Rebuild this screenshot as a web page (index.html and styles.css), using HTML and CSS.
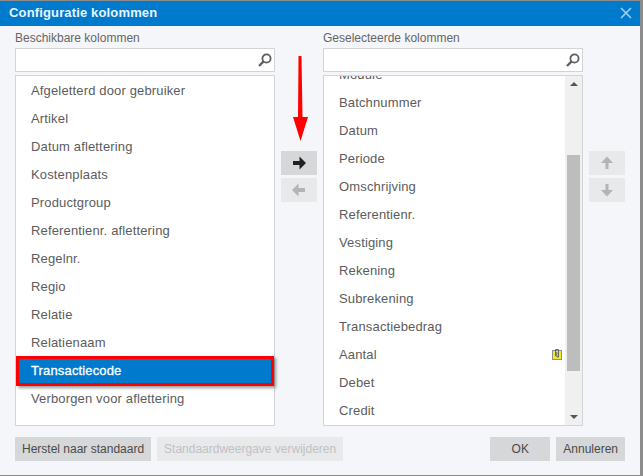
FILE: index.html
```html
<!DOCTYPE html>
<html>
<head>
  <title>Configuratie kolommen</title>
  <link rel="stylesheet" href="styles.css">
</head>
<body>
  <div class="dialog">
    <div class="title-bar">
      <span class="title">Configuratie kolommen</span>
      <svg class="close" width="12" height="12" viewBox="0 0 12 12"><path d="M1 1l10 10M11 1L1 11" stroke="#9fd0ee" stroke-width="1.6" fill="none"/></svg>
    </div>

    <div class="content">
      <div class="column">
        <div class="col-label">Beschikbare kolommen</div>
        <div class="search">
          <svg width="14" height="14" viewBox="0 0 14 14"><circle cx="8.500" cy="5.500" r="4.100" stroke="#5e5e5e" stroke-width="1.800" fill="none"/><path d="M5.600 8.400L1 13" stroke="#5e5e5e" stroke-width="2.200"/></svg>
        </div>
        <div class="list">
          <div class="row">Afgeletterd door gebruiker</div>
          <div class="row">Artikel</div>
          <div class="row">Datum aflettering</div>
          <div class="row">Kostenplaats</div>
          <div class="row">Productgroup</div>
          <div class="row">Referentienr. aflettering</div>
          <div class="row">Regelnr.</div>
          <div class="row">Regio</div>
          <div class="row">Relatie</div>
          <div class="row">Relatienaam</div>
          <div class="row selected">Transactiecode</div>
          <div class="row">Verborgen voor aflettering</div>
        </div>
      </div>

      <div class="move-buttons">
        <div class="icon-btn active">
          <svg width="14" height="14" viewBox="0 0 14 14"><path d="M1 5h6.500V.5L14 7l-6.500 6.500V9H1z" fill="#222"/></svg>
        </div>
        <div class="icon-btn">
          <svg width="14" height="14" viewBox="0 0 14 14"><path d="M13 5H6.500V.5L0 7l6.500 6.500V9H13z" fill="#b4b4b4"/></svg>
        </div>
      </div>

      <div class="column">
        <div class="col-label">Geselecteerde kolommen</div>
        <div class="search">
          <svg width="14" height="14" viewBox="0 0 14 14"><circle cx="8.500" cy="5.500" r="4.100" stroke="#5e5e5e" stroke-width="1.800" fill="none"/><path d="M5.600 8.400L1 13" stroke="#5e5e5e" stroke-width="2.200"/></svg>
        </div>
        <div class="list list-scroll">
          <div class="rows">
            <div class="row cut">Module</div>
            <div class="row">Batchnummer</div>
            <div class="row">Datum</div>
            <div class="row">Periode</div>
            <div class="row">Omschrijving</div>
            <div class="row">Referentienr.</div>
            <div class="row">Vestiging</div>
            <div class="row">Rekening</div>
            <div class="row">Subrekening</div>
            <div class="row">Transactiebedrag</div>
            <div class="row has-note">Aantal
              <svg width="10" height="12" viewBox="0 0 10 12"><rect x="0.500" y="2.500" width="9" height="9" fill="#f5e92a" stroke="#8a8f9a"/><path d="M3.500 8V1.500h3V9H4.800V4" stroke="#666" fill="none"/></svg>
            </div>
            <div class="row">Debet</div>
            <div class="row">Credit</div>
          </div>
          <div class="scrollbar">
            <div class="arrow-up"></div>
            <div class="track"><div class="thumb"></div></div>
            <div class="arrow-down"></div>
          </div>
        </div>
      </div>

      <div class="move-buttons">
        <div class="icon-btn">
          <svg width="14" height="14" viewBox="0 0 14 14"><path d="M5.500 13V7H1L7 .5 13 7H8.500v6z" fill="#b4b4b4"/></svg>
        </div>
        <div class="icon-btn">
          <svg width="14" height="14" viewBox="0 0 14 14"><path d="M5.500 1v6H1l6 6.500L13 7H8.500V1z" fill="#b4b4b4"/></svg>
        </div>
      </div>
    </div>

    <div class="footer">
      <div class="btn">Herstel naar standaard</div>
      <div class="btn disabled">Standaardweergave verwijderen</div>
      <div class="footer-right">
        <div class="btn ok">OK</div>
        <div class="btn">Annuleren</div>
      </div>
    </div>

    <div class="red-box"></div>
    <svg class="red-arrow" width="15" height="85" viewBox="0 0 15 85"><path d="M5.500 0h3l1 61H15L7.500 85 0 61h5z" fill="#f00"/></svg>
  </div>
</body>
</html>
```

FILE: styles.css
```css
* {
  box-sizing: border-box;
}

body {
  margin: 0;
  height: 476px;
  overflow: hidden;
  background-color: #8c8c8c;
  font-family: "Liberation Sans", Arial, sans-serif;
  font-size: 13px;
  color: #555;
}

.dialog {
  position: relative;
  width: 640px;
  height: 474px;
  margin-top: 1px;
  background-color: #f4f6f9;
}

.title-bar {
  display: flex;
  align-items: center;
  justify-content: space-between;
  height: 25px;
  padding: 0 8px 2px 9px;
  background-color: #007acc;
  color: #e8f4fc;
}

.title {
  font-size: 13px;
  font-weight: bold;
  letter-spacing: 0.15px;
}

.content {
  display: flex;
  padding: 3px 0 0 15px;
}

.column {
  flex: none;
  width: 260px;
}

.col-label {
  height: 19px;
  line-height: 18px;
  font-size: 12px;
  color: #666;
}

.search {
  display: flex;
  align-items: center;
  justify-content: flex-end;
  height: 24px;
  padding-right: 2px;
  background-color: #fff;
  border: 1px solid #d2d4da;
}

.list {
  height: 351px;
  margin-top: 3px;
  overflow: hidden;
  background-color: #fff;
  border: 1px solid #d2d4da;
}

.list-scroll {
  display: flex;
}

.rows {
  flex: 1;
  overflow: hidden;
}

.row {
  display: flex;
  align-items: center;
  justify-content: space-between;
  height: 28px;
  padding: 0 3px 0 15px;
  font-size: 13px;
  letter-spacing: 0.15px;
  color: #5c5c5c;
}

.row.selected {
  background-color: #007acc;
  color: #fff;
  -webkit-text-stroke: 0.3px #fff;
}

.row.cut {
  margin-top: -16px;
}

.scrollbar {
  display: flex;
  flex-direction: column;
  align-items: center;
  width: 17px;
  background-color: #f0f0f0;
}

.track {
  flex: 1;
  width: 13px;
}

.thumb {
  width: 13px;
  height: 216px;
  margin-top: 63px;
  background-color: #bdbdbd;
}

.arrow-up,
.arrow-down {
  width: 0;
  height: 0;
  margin: 6px 0;
  border-left: 4px solid transparent;
  border-right: 4px solid transparent;
}

.arrow-up {
  border-bottom: 4px solid #555;
}

.arrow-down {
  border-top: 4px solid #555;
}

.move-buttons {
  flex: none;
  display: flex;
  flex-direction: column;
  gap: 3px;
  width: 48px;
  padding: 122px 6px 0;
}

.icon-btn {
  display: flex;
  align-items: center;
  justify-content: center;
  height: 24px;
  background-color: #e8e9eb;
}

.icon-btn.active {
  background-color: #d6d7d9;
}

.footer {
  display: flex;
  gap: 6px;
  padding: 11px 15px 0;
}

.footer-right {
  display: flex;
  gap: 6px;
  margin-left: auto;
}

.btn {
  height: 24px;
  padding: 0 7px;
  line-height: 24px;
  font-size: 12px;
  color: #4a4a4a;
  background-color: #d6d7d9;
}

.btn.disabled {
  color: #c0c1c4;
  background-color: #e8e9eb;
}

.btn.ok {
  width: 60px;
  text-align: center;
}

/* annotations on top of the screenshot */
.red-box {
  position: absolute;
  left: 16px;
  top: 355px;
  width: 258px;
  height: 30px;
  border: 3px solid #f00;
  box-shadow: 2px 2px 3px rgba(0, 0, 0, 0.4);
}

.red-arrow {
  position: absolute;
  left: 293px;
  top: 55px;
}
```
